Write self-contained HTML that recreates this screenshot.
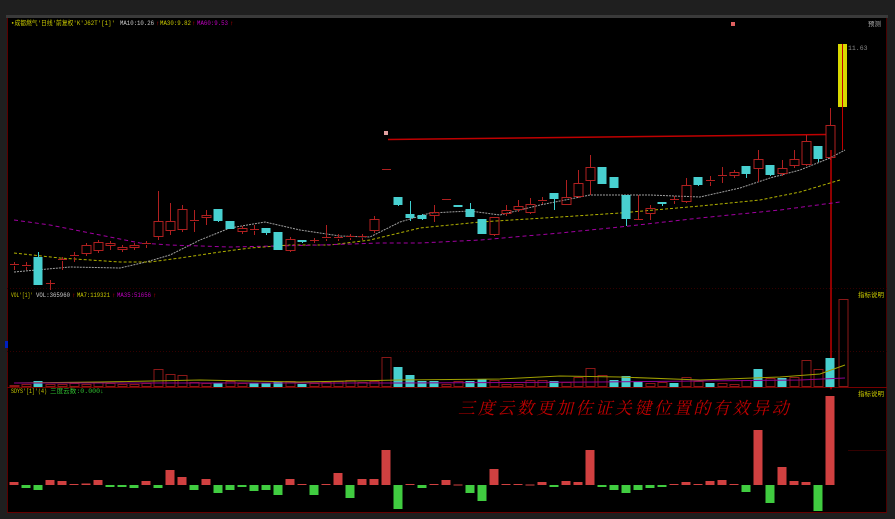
<!DOCTYPE html><html><head><meta charset="utf-8"><style>
html,body{margin:0;padding:0;background:#1f1f1f;width:895px;height:519px;overflow:hidden}
svg{display:block}
text{font-family:"Liberation Mono","Noto Sans CJK SC",monospace;font-size:6.5px}
</style></head><body>
<svg id="s" width="895" height="519" xmlns="http://www.w3.org/2000/svg">
<rect x="0" y="0" width="895" height="519" fill="#1f1f1f"/>
<rect x="6" y="15" width="882" height="3" fill="#3a3a3a"/>
<rect x="7" y="18" width="880" height="495" fill="#000"/>
<line x1="7.5" y1="18" x2="7.5" y2="513" stroke="#5a0000"/>
<line x1="886.5" y1="18" x2="886.5" y2="513" stroke="#4a0000"/>
<line x1="7" y1="288.5" x2="887" y2="288.5" stroke="#300" stroke-dasharray="1,2"/>
<line x1="7" y1="387.5" x2="887" y2="387.5" stroke="#700"/>
<line x1="7" y1="512.5" x2="887" y2="512.5" stroke="#600"/>
<line x1="7" y1="351.5" x2="887" y2="351.5" stroke="#300" stroke-dasharray="1,2"/>
<line x1="848" y1="450.5" x2="887" y2="450.5" stroke="#300"/>
<rect x="5" y="341" width="3" height="7" fill="#0020c0"/>
<text x="11" y="25" fill="#c8c800" textLength="104" lengthAdjust="spacingAndGlyphs">▪成都燃气'日线'前复权'K'J62T'[1]'</text>
<text x="120" y="25" fill="#ccc" textLength="34" lengthAdjust="spacingAndGlyphs">MA10:10.26</text><text x="156" y="25" fill="#d00">↑</text>
<text x="160" y="25" fill="#c8c800" textLength="31" lengthAdjust="spacingAndGlyphs">MA30:9.82</text><text x="192" y="25" fill="#d00">↑</text>
<text x="197" y="25" fill="#c000c0" textLength="31" lengthAdjust="spacingAndGlyphs">MA60:9.53</text><text x="230" y="25" fill="#d00">↑</text>
<text x="868" y="26" fill="#aaa">预测</text>
<text x="848" y="50" fill="#888">11.63</text>
<text x="11" y="297" fill="#c8c800" textLength="22" lengthAdjust="spacingAndGlyphs">VOL'[1]'</text><text x="36" y="297" fill="#ccc" textLength="34" lengthAdjust="spacingAndGlyphs">VOL:365960</text><text x="72" y="297" fill="#d00">↑</text>
<text x="77" y="297" fill="#c8c800" textLength="33" lengthAdjust="spacingAndGlyphs">MA7:119321</text><text x="112" y="297" fill="#d00">↑</text>
<text x="117" y="297" fill="#c000c0" textLength="34" lengthAdjust="spacingAndGlyphs">MA35:51656</text><text x="153" y="297" fill="#d00">↑</text>
<text x="11" y="393" fill="#c8c800" textLength="36" lengthAdjust="spacingAndGlyphs">SDYS'[1]'(4)</text><text x="50" y="393" fill="#30c030" textLength="54" lengthAdjust="spacingAndGlyphs">三度云数:0.000↓</text>
<text x="858" y="297" fill="#c8c800">指标说明</text>
<text x="858" y="396" fill="#c8c800">指标说明</text>
<text x="458" y="414" fill="#c00000" style="font-family:'Noto Serif CJK SC','Noto Sans CJK SC',serif;font-size:17px;letter-spacing:2.6px;font-style:italic">三度云数更加佐证关键位置的有效异动</text>
<rect x="731" y="22" width="4" height="4" fill="#e06060"/>
<rect x="384" y="131" width="4" height="4" fill="#e0a0a0"/>
<line x1="388" y1="139.5" x2="826" y2="134.5" stroke="#c00000" stroke-width="1.5"/>
<line x1="831" y1="150" x2="831" y2="385" stroke="#c00000" stroke-width="1.5"/>
<polygon points="828,383 834,383 831,390" fill="#c00000"/>
<polyline fill="none" stroke="#a0a0a0" stroke-width="1" stroke-dasharray="2,1" points="14,272 70,267 120,268 146,262 170,255 200,240 230,228 265,222 300,230 340,236 370,237 400,222 430,213 470,211 500,215 540,205 590,195 620,195 650,195 700,197 740,188 770,178 800,170 830,158 845,150"/>
<polyline fill="none" stroke="#b0b000" stroke-width="1" stroke-dasharray="3,2" points="14,253 60,258 120,262 150,262 180,258 220,252 250,248 290,245 330,245 370,240 420,228 480,222 560,217 620,213 700,206 760,200 800,192 840,180"/>
<polyline fill="none" stroke="#a000a0" stroke-width="1" stroke-dasharray="4,3" points="14,220 50,225 100,235 140,243 170,245 230,247 320,245 380,243 420,243 480,240 560,233 620,227 700,218 780,210 840,202"/>
<g id="g"></g>
</svg>
<script>
var g=document.getElementById('g'),h='';
function R(x,y,w,hh,f,s){h+='<rect x="'+x+'" y="'+y+'" width="'+w+'" height="'+Math.max(hh,1)+'" fill="'+f+'"'+(s?' stroke="'+s+'"':'')+'/>';}
function L(x,y1,y2,c){h+='<line x1="'+x+'" x2="'+x+'" y1="'+y1+'" y2="'+y2+'" stroke="'+c+'"/>';}
var C=[[0,264,266,262,270,'r'],[1,265,267,262,270,'r'],[2,257,285,252,285,'c'],[3,283,284,280,290,'r'],[4,259,261,257,270,'r'],[5,255,257,252,262,'r'],[6,245,254,243,256,'r'],[7,242,251,240,253,'r'],[8,243,246,241,250,'r'],[9,247,250,245,252,'r'],[10,245,248,243,250,'r'],[11,243,245,241,248,'r'],[12,221,237,191,240,'r'],[13,221,231,203,235,'r'],[14,209,230,205,232,'r'],[15,220,222,210,232,'r'],[16,215,218,210,225,'r'],[17,209,221,209,222,'c'],[18,221,229,221,229,'c'],[19,228,232,226,234,'r'],[20,229,231,225,235,'r'],[21,228,233,228,235,'c'],[22,232,250,232,250,'c'],[23,239,251,237,252,'r'],[24,240,242,240,243,'c'],[25,240,241,238,243,'r'],[26,237,239,225,241,'r'],[27,237,239,234,241,'r'],[28,236,238,234,240,'r'],[29,236,238,234,240,'r'],[30,219,231,216,233,'r'],[31,169,171,169,171,'r'],[32,197,205,197,206,'c'],[33,214,218,201,221,'c'],[34,215,219,214,220,'c'],[35,212,216,205,222,'r'],[36,199,201,199,201,'r'],[37,205,207,205,207,'c'],[38,209,217,203,217,'c'],[39,219,234,219,234,'c'],[40,217,235,217,236,'r'],[41,210,214,205,216,'r'],[42,206,210,200,212,'r'],[43,204,213,198,214,'r'],[44,200,202,197,204,'r'],[45,193,199,193,210,'c'],[46,197,205,180,205,'r'],[47,183,197,170,198,'r'],[48,167,181,155,195,'r'],[49,167,184,167,184,'c'],[50,177,188,177,188,'c'],[51,195,219,195,226,'c'],[52,219,221,195,221,'r'],[53,208,214,205,220,'r'],[54,202,204,202,206,'c'],[55,199,201,196,204,'r'],[56,185,202,178,203,'r'],[57,177,185,177,186,'c'],[58,180,182,176,186,'r'],[59,175,177,167,183,'r'],[60,172,176,170,178,'r'],[61,166,174,166,178,'c'],[62,159,169,150,182,'r'],[63,165,175,165,176,'c'],[64,168,174,160,176,'r'],[65,159,166,150,168,'r'],[66,141,165,135,166,'r'],[67,146,159,146,162,'c'],[68,125,158,108,160,'r']];
C.forEach(function(c){var x=14+12*c[0];
 if(c[5]=='c'){L(x+.5,c[3],c[4],'#40d0d0');R(x-4.5,c[1],9,c[2]-c[1],'#48d0d0');}
 else{L(x+.5,c[3],c[1],'#b02020');L(x+.5,c[2],c[4],'#b02020');if(c[2]-c[1]<3)R(x-4,c[1],9,1,'#b02020');else R(x-4,c[1]+.5,9,c[2]-c[1]-1,'none','#b02020');}});
R(838,44,9,63,'#d8d800');L(842.5,44,108,'#c00000');L(842.5,108,150,'#c00000');
var V=[2,3,6,3,3,4,3,5,4,3,3,4,18,13,12,5,4,4,6,4,4,4,5,6,3,4,5,6,7,5,6,30,20,12,6,6,3,6,6,8,7,3,3,7,7,6,5,10,19,12,7,11,5,4,5,4,10,6,4,4,3,7,18,9,9,10,27,18,29,88];
var VC='rrcrrrrrrrrrrrrrrcrrcccrcrrrrrrrccccrrccrrrrrcrrrrcccrrcrrcrrrcrcrrrcrr';
V.forEach(function(v,i){var x=14+12*i;if(i>=69)x=843;
 if(VC[i]=='c')R(x-4.5,387-v,9,v,'#48d0d0');else R(x-4,387-v+.5,9,v-1,'none','#8a1818');});
h+='<polyline fill="none" stroke="#a0a000" stroke-width="1" points="14,383 100,382 200,380 300,382 400,380 500,379 560,376 620,377 700,380 780,377 820,374 845,365"/>';
h+='<polyline fill="none" stroke="#900090" stroke-width="1" points="14,383 200,383 400,383 600,382 800,380 845,378"/>';
var S=[3,-3,-5,5,4,1,1.5,5,-2,-2,-3,4,-3,15,8,-5,6,-8,-5,-2,-6,-5,-10,6,1,-10,1,12,-13,6,6,35,-24,1,-3,1,5,0,-8,-16,16,1,1,0,3,-2,4,3,35,-2,-5,-8,-5,-3,-2,1,3,1,4,5,1,-7,55,-18,18,4,3,-26,89];
S.forEach(function(v,i){var x=14+12*i;var a=Math.abs(v);if(a<.5)a=.5;
 if(v>=0)R(x-4.5,485-a,9,a,'#d04040');else R(x-4.5,485,9,a,'#40cc40');});
g.innerHTML=h;
</script>
</body></html>
